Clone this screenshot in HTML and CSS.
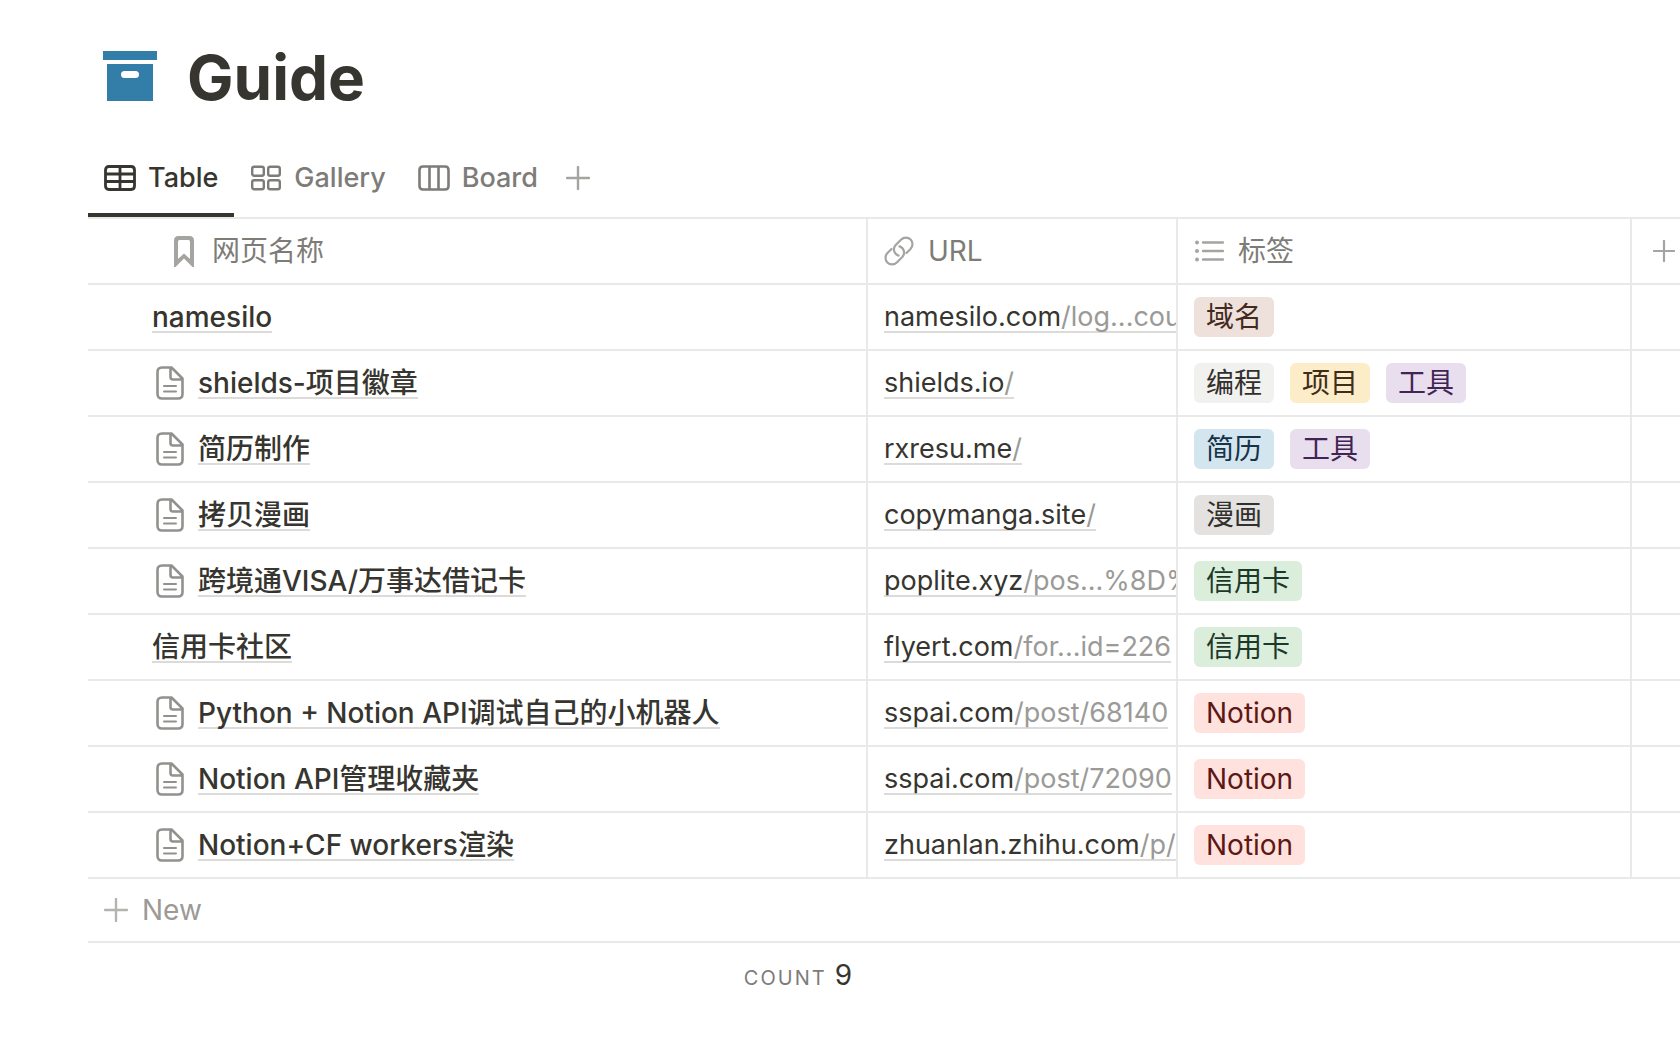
FILE: index.html
```html
<!DOCTYPE html>
<html lang="zh-CN">
<head>
<meta charset="utf-8">
<meta name="viewport" content="width=device-width, initial-scale=1">
<title>Guide</title>
<link rel="stylesheet" href="styles.css">
</head>
<body>
<svg class="sprite" aria-hidden="true">
  <symbol id="page" viewBox="0 0 28 34">
    <path d="M6 1.500H15.500L26.500 12.500V28Q26.500 32.500 22 32.500H6Q1.500 32.500 1.500 28V6Q1.500 1.500 6 1.500Z M14.500 2V11Q14.500 13.500 17 13.500H26" fill="none" stroke="currentColor" stroke-width="2.600" stroke-linejoin="round"/>
    <path d="M8 20H20M8 25.500H20" fill="none" stroke="currentColor" stroke-width="2" stroke-linecap="round"/>
  </symbol>
  <symbol id="plus" viewBox="0 0 24 24">
    <path d="M12 1V23M1 12H23" fill="none" stroke="currentColor" stroke-width="2.400" stroke-linecap="round"/>
  </symbol>
</svg>
<main class="database">
  <header class="title">
    <svg class="title-icon" viewBox="0 0 54 50" aria-hidden="true"><path d="M0 0H54V9H0ZM4 13H50V50H4ZM21.500 20A3.500 3.500 0 0 0 21.500 27H32.500A3.500 3.500 0 0 0 32.500 20Z" fill="#337ea9" fill-rule="evenodd"/></svg>
    <h1>Guide</h1>
  </header>

  <nav class="tabs" aria-label="Views">
    <button class="tab tab-active" type="button">
      <svg class="view-icon" viewBox="0 0 32 26" aria-hidden="true"><path d="M5 1.500H27Q30.500 1.500 30.500 5V21Q30.500 24.500 27 24.500H5Q1.500 24.500 1.500 21V5Q1.500 1.500 5 1.500ZM1.500 9H30.500M1.500 16.500H30.500M16 2V24" fill="none" stroke="currentColor" stroke-width="2.800"/></svg>Table</button>
    <button class="tab" type="button">
      <svg class="view-icon" viewBox="0 0 32 26" aria-hidden="true"><g fill="none" stroke="currentColor" stroke-width="2.400"><rect x="2.200" y="1.700" width="11.600" height="9" rx="2"/><rect x="18.200" y="1.700" width="11.600" height="9" rx="2"/><rect x="2.200" y="15.300" width="11.600" height="9" rx="2"/><rect x="18.200" y="15.300" width="11.600" height="9" rx="2"/></g></svg>Gallery</button>
    <button class="tab" type="button">
      <svg class="view-icon" viewBox="0 0 32 26" aria-hidden="true"><path d="M5 1.500H27Q30.500 1.500 30.500 5V21Q30.500 24.500 27 24.500H5Q1.500 24.500 1.500 21V5Q1.500 1.500 5 1.500ZM11.500 2V24M20.500 2V24" fill="none" stroke="currentColor" stroke-width="2.600"/></svg>Board</button>
    <button class="tab tab-add" type="button" aria-label="Add view"><svg class="plus" aria-hidden="true"><use href="#plus"/></svg></button>
  </nav>

  <table class="grid">
    <colgroup><col class="col-name"><col class="col-url"><col class="col-tags"><col></colgroup>
    <thead>
      <tr>
        <th class="name-head" scope="col"><div class="head"><svg class="bookmark" viewBox="0 0 20 31" aria-hidden="true"><path d="M4.500 0H15.500Q20 0 20 4.500V31H18.500L10 22.500L1.500 31H0V4.500Q0 0 4.500 0ZM5.500 4Q4 4 4 5.500V23L10 17.500L16 23V5.500Q16 4 14.500 4Z" fill="currentColor" fill-rule="evenodd"/></svg>网页名称</div></th>
        <th scope="col"><div class="head"><svg class="head-icon" viewBox="0 0 30 30" aria-hidden="true"><g fill="none" stroke="currentColor" stroke-width="2.200" stroke-linecap="round"><path d="M7.500 13L3.500 17A6.500 6.500 0 0 0 12.800 26.500L18.500 20.800A6.500 6.500 0 0 0 15.500 10.400"/><path d="M22.500 17L26.500 13A6.500 6.500 0 0 0 17.200 3.500L11.500 9.200A6.500 6.500 0 0 0 14.500 19.600"/></g></svg>URL</div></th>
        <th scope="col"><div class="head"><svg class="head-icon" viewBox="0 0 30 30" aria-hidden="true"><g fill="currentColor"><circle cx="3" cy="6.500" r="2"/><circle cx="3" cy="15" r="2"/><circle cx="3" cy="23.500" r="2"/></g><path d="M9 6.500H29M9 15H29M9 23.500H29" fill="none" stroke="currentColor" stroke-width="2.400" stroke-linecap="round"/></svg>标签</div></th>
        <th scope="col"><button class="add-column" type="button" aria-label="Add property"><svg class="plus plus-small" aria-hidden="true"><use href="#plus"/></svg></button></th>
      </tr>
    </thead>
    <tbody>
      <tr>
        <td class="name"><div class="cell"><a href="#namesilo">namesilo</a></div></td>
        <td class="url"><div class="cell"><a href="#u1">namesilo.com<span>/log...cou</span></a></div></td>
        <td><div class="cell tags"><span class="tag brown">域名</span></div></td><td></td>
      </tr>
      <tr>
        <td class="name"><div class="cell"><svg class="page" aria-hidden="true"><use href="#page"/></svg><a href="#shields">shields-项目徽章</a></div></td>
        <td class="url"><div class="cell"><a href="#u2">shields.io<span>/</span></a></div></td>
        <td><div class="cell tags"><span class="tag light">编程</span><span class="tag yellow">项目</span><span class="tag purple">工具</span></div></td><td></td>
      </tr>
      <tr>
        <td class="name"><div class="cell"><svg class="page" aria-hidden="true"><use href="#page"/></svg><a href="#resume">简历制作</a></div></td>
        <td class="url"><div class="cell"><a href="#u3">rxresu.me<span>/</span></a></div></td>
        <td><div class="cell tags"><span class="tag blue">简历</span><span class="tag purple">工具</span></div></td><td></td>
      </tr>
      <tr>
        <td class="name"><div class="cell"><svg class="page" aria-hidden="true"><use href="#page"/></svg><a href="#manga">拷贝漫画</a></div></td>
        <td class="url"><div class="cell"><a href="#u4">copymanga.site<span>/</span></a></div></td>
        <td><div class="cell tags"><span class="tag gray">漫画</span></div></td><td></td>
      </tr>
      <tr>
        <td class="name"><div class="cell"><svg class="page" aria-hidden="true"><use href="#page"/></svg><a href="#visa">跨境通VISA/万事达借记卡</a></div></td>
        <td class="url"><div class="cell"><a href="#u5">poplite.xyz<span>/pos...%8D%</span></a></div></td>
        <td><div class="cell tags"><span class="tag green">信用卡</span></div></td><td></td>
      </tr>
      <tr>
        <td class="name"><div class="cell"><a href="#cards">信用卡社区</a></div></td>
        <td class="url"><div class="cell"><a href="#u6">flyert.com<span>/for...id=226</span></a></div></td>
        <td><div class="cell tags"><span class="tag green">信用卡</span></div></td><td></td>
      </tr>
      <tr>
        <td class="name"><div class="cell"><svg class="page" aria-hidden="true"><use href="#page"/></svg><a href="#python">Python + Notion API调试自己的小机器人</a></div></td>
        <td class="url"><div class="cell"><a href="#u7">sspai.com<span>/post/68140</span></a></div></td>
        <td><div class="cell tags"><span class="tag red">Notion</span></div></td><td></td>
      </tr>
      <tr>
        <td class="name"><div class="cell"><svg class="page" aria-hidden="true"><use href="#page"/></svg><a href="#api">Notion API管理收藏夹</a></div></td>
        <td class="url"><div class="cell"><a href="#u8">sspai.com<span>/post/72090</span></a></div></td>
        <td><div class="cell tags"><span class="tag red">Notion</span></div></td><td></td>
      </tr>
      <tr>
        <td class="name"><div class="cell"><svg class="page" aria-hidden="true"><use href="#page"/></svg><a href="#workers">Notion+CF workers渲染</a></div></td>
        <td class="url"><div class="cell"><a href="#u9">zhuanlan.zhihu.com<span>/p/</span></a></div></td>
        <td><div class="cell tags"><span class="tag red">Notion</span></div></td><td></td>
      </tr>
    </tbody>
  </table>
  <button class="new-row" type="button"><svg class="plus" aria-hidden="true"><use href="#plus"/></svg>New</button>
  <footer class="summary"><span class="summary-label">COUNT</span><span>9</span></footer>
</main>
</body>
</html>
```
FILE: styles.css
```css
* { box-sizing: border-box; }

body {
  margin: 0;
  background: #fff;
  color: #37352f;
  font: 400 28px/64px Inter, "Noto Sans CJK SC", sans-serif;
  overflow-x: hidden;
}

button {
  border: 0;
  padding: 0;
  background: none;
  font: inherit;
  color: inherit;
  cursor: pointer;
}

svg { display: block; flex: none; }
.sprite { position: absolute; width: 0; height: 0; }

.database { padding: 46px 0 32px 88px; }

.title {
  display: flex;
  align-items: center;
  gap: 30px;
  padding-left: 15px;
}
.title-icon { width: 54px; height: 50px; margin-bottom: 4px; }
h1 {
  margin: 0;
  font-size: 62px;
  line-height: 64px;
  font-weight: 700;
}

.tabs {
  display: flex;
  margin-top: 29px;
  border-bottom: 2px solid #e9e9e7;
}
.tab {
  display: flex;
  align-items: center;
  gap: 12px;
  height: 78px;
  padding: 4px 16px 0;
  border-bottom: 4px solid transparent;
  font-size: 27px;
  font-weight: 500;
  line-height: 70px;
  color: #7d7c78;
}
.tab-active { color: #37352f; border-color: #37352f; }
.tab-add { padding-left: 12px; color: #a5a4a0; }
.view-icon { width: 32px; height: 26px; }
.plus { width: 24px; height: 24px; }
.plus-small { width: 22px; height: 22px; }

.grid {
  width: 100%;
  table-layout: fixed;
  border-collapse: separate;
  border-spacing: 0;
}
.col-name { width: 780px; }
.col-url { width: 310px; }
.col-tags { width: 454px; }

th, td {
  height: 66px;
  padding: 0 0 0 16px;
  border-bottom: 2px solid #e9e9e7;
  border-right: 2px solid #e9e9e7;
  overflow: hidden;
  text-align: left;
  font-weight: 400;
}
th:last-child, td:last-child { border-right: 0; }
th:last-child { padding-left: 21px; }
.name { padding-left: 64px; }
.name-head { padding-left: 86px; }

.head {
  display: flex;
  align-items: center;
  gap: 14px;
  color: #7d7c78;
}
.head svg, .add-column { color: #a5a4a0; }
.bookmark { width: 20px; height: 31px; margin-right: 4px; }
.head-icon { width: 30px; height: 30px; }
.add-column { display: block; }

.cell {
  display: flex;
  align-items: center;
  height: 64px;
  white-space: nowrap;
}
.page { width: 28px; height: 34px; margin: 0 14px 0 4px; color: #91918e; }
.cell a {
  padding-top: 2px;
  line-height: 28px;
  border-bottom: 2px solid #dcdbd9;
  color: inherit;
  text-decoration: none;
}
.cell a span { color: #9b9a97; }
.name a { font-weight: 500; }
.url { font-size: 27px; }

.tags { gap: 16px; }
.tag {
  height: 40px;
  padding: 0 12px;
  border-radius: 6px;
  line-height: 40px;
}
.brown { background: #eee0da; color: #442a1e; }
.light { background: #f1f1f0; color: #32302c; }
.yellow { background: #fdecc8; color: #402c1b; }
.purple { background: #e8deee; color: #412454; }
.blue { background: #d3e5ef; color: #183347; }
.gray { background: #e3e2e0; color: #32302c; }
.green { background: #dbeddb; color: #1c3829; }
.red { background: #ffe2dd; color: #5d1715; }

.new-row {
  display: flex;
  align-items: center;
  gap: 14px;
  width: 100%;
  height: 64px;
  padding-left: 16px;
  border-bottom: 2px solid #e9e9e7;
  color: #9b9a97;
}
.new-row .plus { color: #b4b3b0; }

.summary {
  display: flex;
  align-items: baseline;
  justify-content: flex-end;
  gap: 8px;
  width: 764px;
}
.summary-label {
  font-size: 20px;
  letter-spacing: 2px;
  color: #7d7c78;
}
```
